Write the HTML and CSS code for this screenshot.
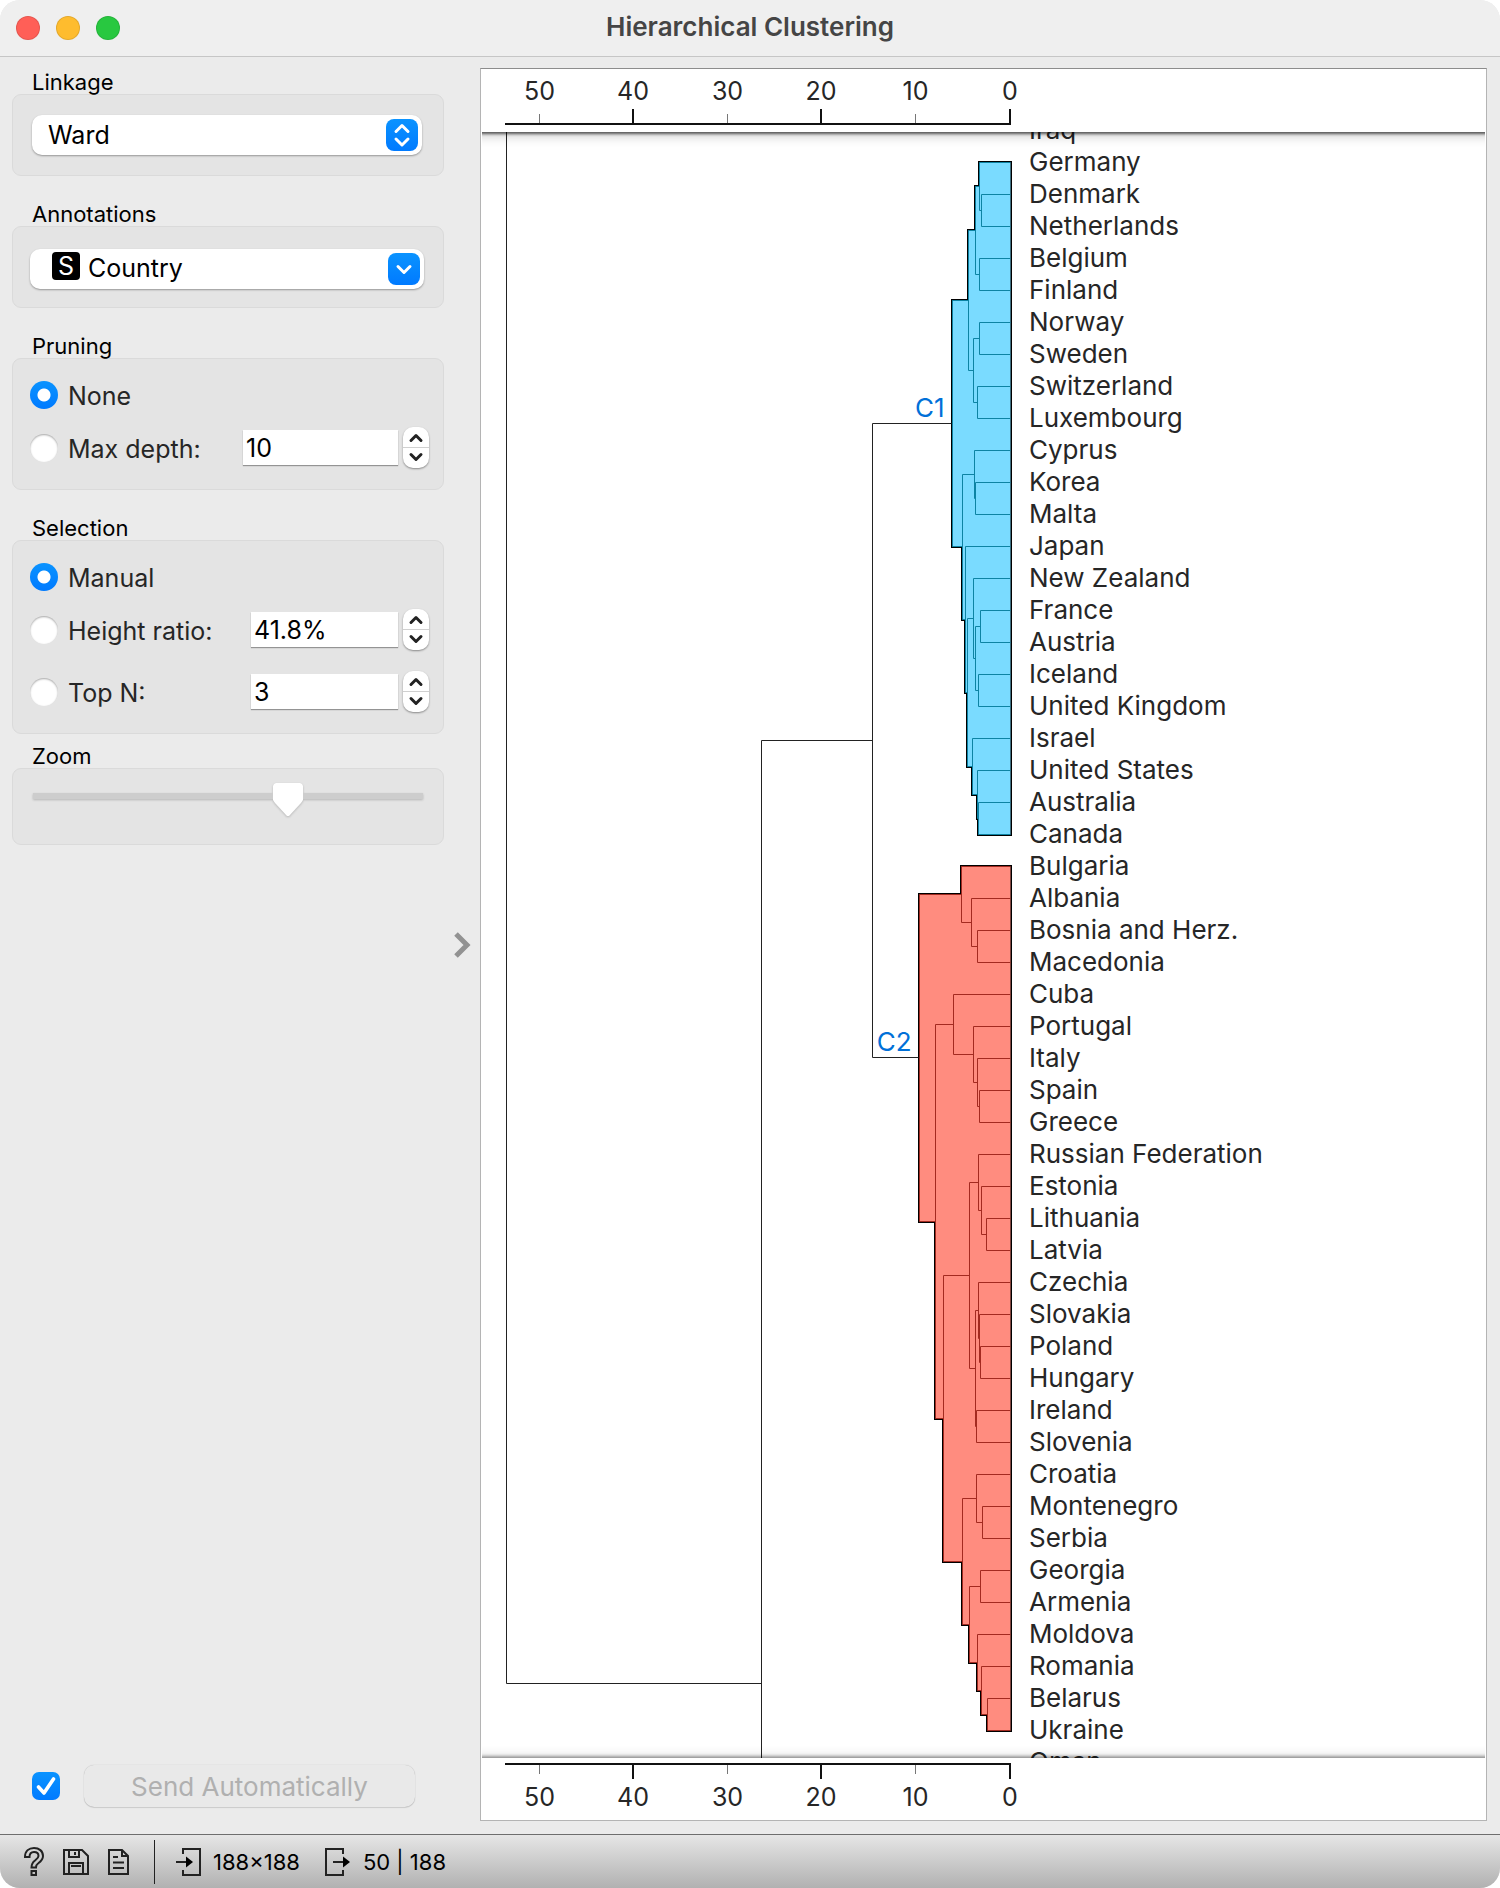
FILE: index.html
```html
<!DOCTYPE html>
<html lang="en">
<head>
    <meta charset="UTF-8">
    <meta name="viewport" content="width=device-width, initial-scale=1.0">
    <title>Hierarchical Clustering</title>
    <link rel="stylesheet" href="styles.css">
</head>
<body>
    <div class="window">
        <header class="titlebar">
            <div class="lights">
                <button class="light close" aria-label="Close"></button>
                <button class="light minimize" aria-label="Minimize"></button>
                <button class="light maximize" aria-label="Zoom window"></button>
            </div>
            <h1>Hierarchical Clustering</h1>
        </header>

        <div class="content">
            <aside class="controls">
                <fieldset class="group">
                    <legend>Linkage</legend>
                    <div class="box">
                        <div class="combo">
                            <select aria-label="Linkage">
                                <option>Ward</option>
                            </select>
                            <svg class="combo-arrow" viewBox="0 0 32 32">
                                <path d="M10 12.5 L16 6.5 L22 12.5 M10 20 L16 26 L22 20"/>
                            </svg>
                        </div>
                    </div>
                </fieldset>

                <fieldset class="group">
                    <legend>Annotations</legend>
                    <div class="box box-wide">
                        <div class="combo combo-icon">
                            <select aria-label="Annotations">
                                <option>Country</option>
                            </select>
                            <span class="var-icon">S</span>
                            <svg class="combo-arrow" viewBox="0 0 32 32">
                                <path d="M10 13.5 L16 19.5 L22 13.5"/>
                            </svg>
                        </div>
                    </div>
                </fieldset>

                <fieldset class="group">
                    <legend>Pruning</legend>
                    <div class="box options">
                        <div class="row">
                            <input type="radio" name="pruning" id="pruneNone" checked>
                            <label for="pruneNone">None</label>
                        </div>
                        <div class="row">
                            <input type="radio" name="pruning" id="pruneDepth">
                            <label for="pruneDepth">Max depth:</label>
                            <input class="spin wide" type="text" value="10" aria-label="Max depth">
                            <div class="stepper">
                                <button aria-label="Increase"><svg viewBox="0 0 26 20"><path d="M8 13.5 L13 8.5 L18 13.5"/></svg></button>
                                <button aria-label="Decrease"><svg viewBox="0 0 26 20"><path d="M8 6.5 L13 11.5 L18 6.5"/></svg></button>
                            </div>
                        </div>
                    </div>
                </fieldset>

                <fieldset class="group group-tight">
                    <legend>Selection</legend>
                    <div class="box options">
                        <div class="row">
                            <input type="radio" name="selection" id="selManual" checked>
                            <label for="selManual">Manual</label>
                        </div>
                        <div class="row">
                            <input type="radio" name="selection" id="selRatio">
                            <label for="selRatio">Height ratio:</label>
                            <input class="spin" type="text" value="41.8%" aria-label="Height ratio">
                            <div class="stepper">
                                <button aria-label="Increase"><svg viewBox="0 0 26 20"><path d="M8 13.5 L13 8.5 L18 13.5"/></svg></button>
                                <button aria-label="Decrease"><svg viewBox="0 0 26 20"><path d="M8 6.5 L13 11.5 L18 6.5"/></svg></button>
                            </div>
                        </div>
                        <div class="row row-last">
                            <input type="radio" name="selection" id="selTop">
                            <label for="selTop">Top N:</label>
                            <input class="spin" type="text" value="3" aria-label="Top N">
                            <div class="stepper">
                                <button aria-label="Increase"><svg viewBox="0 0 26 20"><path d="M8 13.5 L13 8.5 L18 13.5"/></svg></button>
                                <button aria-label="Decrease"><svg viewBox="0 0 26 20"><path d="M8 6.5 L13 11.5 L18 6.5"/></svg></button>
                            </div>
                        </div>
                    </div>
                </fieldset>

                <fieldset class="group">
                    <legend>Zoom</legend>
                    <div class="box zoom-box">
                        <input type="range" class="slider" min="0" max="300" value="200" aria-label="Zoom">
                    </div>
                </fieldset>

                <div class="send">
                    <input type="checkbox" id="auto" aria-label="Send automatically" checked>
                    <button class="send-btn" disabled>Send Automatically</button>
                </div>
            </aside>

            <button class="collapse" aria-label="Toggle control area">
                <svg viewBox="0 0 20 28"><path d="M3 3 L14 14 L3 25"/></svg>
            </button>

            <main class="plot">
                <svg class="axis" id="axisTop" width="560" height="63"></svg>
                <div class="view">
                    <svg class="tree" id="tree" width="531"></svg>
                    <ul class="labels" id="labels"></ul>
                </div>
                <svg class="axis" id="axisBottom" width="560" height="62"></svg>
            </main>
        </div>

        <footer class="statusbar">
            <button class="tool" aria-label="Help">
                <svg width="22" height="32" viewBox="0 0 22 32"><path d="M2 11 C2 5 6 2 11 2 C16 2 20 5 20 10 C20 14 17 16 15 17.5 C13.5 18.5 13 19 13 21.5 H8.5 C8.5 17.5 10 16 12 14.5 C14 13 15.5 12 15.5 10 C15.5 7.5 13.5 6 11 6 C8.5 6 6.5 7.5 6.5 11 Z M8.5 25 H13 V29 H8.5 Z"/></svg>
            </button>
            <button class="tool" aria-label="Save image">
                <svg width="28" height="28" viewBox="0 0 28 28"><path d="M2 2 H20 L26 8 V26 H2 Z M7 2 V9 H17 V2 M13 4 V7 M7 26 V15 H21 V26 M9 18 H19"/></svg>
            </button>
            <button class="tool" aria-label="Report">
                <svg width="23" height="28" viewBox="0 0 23 28"><path d="M2 2 H15 L21 8 V26 H2 Z M15 2 V8 H21 M6 9 H11 M6 14.5 H17 M6 20 H17"/></svg>
            </button>
            <span class="divider"></span>
            <span class="status">
                <svg width="26" height="30" viewBox="0 0 26 30"><path d="M8 7 V2 H25 V28 H8 V23 M1 15 H13"/><path class="solid" d="M11 9.5 L18 15 L11 20.5 Z"/></svg>
                188×188
            </span>
            <span class="status">
                <svg width="26" height="30" viewBox="0 0 26 30"><path d="M18 7 V2 H1 V28 H18 V23 M8 15 H20"/><path class="solid" d="M18 9.5 L25 15 L18 20.5 Z"/></svg>
                50 | 188
            </span>
        </footer>
    </div>

    <script src="script.js"></script>
</body>
</html>
```
FILE: styles.css
```css
:root {
    --window: #ebebeb;
    --box: #e4e4e4;
    --box-border: #dadada;
    --accent: linear-gradient(#0a93ff, #007aff);
    --text: #262626;
}

* {
    box-sizing: border-box;
    margin: 0;
    padding: 0;
}

body {
    background: #fff;
    color: #000;
    font-family: Inter, "Liberation Sans", sans-serif;
    font-size: 25px;
}

button, input, select {
    font: inherit;
    border: none;
}

.window {
    display: flex;
    flex-direction: column;
    min-height: 100vh;
    background: var(--window);
    border-radius: 20px;
    overflow: hidden;
}

/* Title bar */
.titlebar {
    display: grid;
    grid-template-columns: 1fr auto 1fr;
    align-items: center;
    height: 57px;
    padding: 0 16px;
    background: #efefef;
    border-bottom: 1px solid #c6c6c6;
}

.titlebar h1 {
    padding-bottom: 2px;
    font-size: 26px;
    font-weight: 600;
    line-height: 54px;
    color: #454545;
}

.lights {
    display: flex;
    gap: 16px;
}

.light {
    width: 24px;
    height: 24px;
    border-radius: 50%;
    border: 1px solid rgba(0, 0, 0, 0.1);
}

.close {
    background: #ff5f57;
}

.minimize {
    background: #febc2e;
}

.maximize {
    background: #28c840;
}

.content {
    flex: 1;
    display: flex;
    padding: 11px 13px 13px 12px;
}

/* Control area */
.controls {
    display: flex;
    flex-direction: column;
    width: 432px;
}

.group {
    border: none;
    margin-bottom: 24px;
}

.group-tight {
    margin-bottom: 8px;
}

.group legend {
    padding: 2px 0 0 20px;
    font-size: 22px;
    line-height: 24px;
}

.box {
    background: var(--box);
    border: 1px solid var(--box-border);
    border-radius: 9px;
    padding: 20px 21px 20px 19px;
}

.box-wide {
    padding: 22px 19px 18px 17px;
}

.combo {
    position: relative;
    height: 40px;
}

.combo select {
    appearance: none;
    width: 100%;
    height: 40px;
    padding-left: 16px;
    border-radius: 10px;
    background: #fff;
    color: #000;
    box-shadow: 0 1px 2px rgba(0, 0, 0, 0.35);
}

.combo-icon select {
    padding-left: 58px;
    padding-bottom: 2px;
}

.combo-arrow {
    position: absolute;
    top: 4px;
    right: 4px;
    width: 32px;
    height: 32px;
    border-radius: 8px;
    background: var(--accent);
    fill: none;
    stroke: #fff;
    stroke-width: 3;
    stroke-linecap: round;
    stroke-linejoin: round;
    pointer-events: none;
}

.var-icon {
    position: absolute;
    left: 22px;
    top: 3px;
    width: 28px;
    height: 28px;
    border-radius: 4px;
    background: #000;
    color: #fff;
    line-height: 28px;
    text-align: center;
    pointer-events: none;
}

.options {
    display: flex;
    flex-direction: column;
    gap: 12px;
    padding: 15px 14px 21px 17px;
}

.row {
    display: flex;
    align-items: center;
    height: 41px;
    color: var(--text);
}

.row-last {
    margin-top: 9px;
}

.row label {
    flex: 1;
    padding: 2px 0 0 10px;
}

input[type="radio"] {
    appearance: none;
    width: 28px;
    height: 28px;
    border-radius: 50%;
    background: #fff;
    box-shadow: inset 0 1px 2px rgba(0, 0, 0, 0.35);
}

input[type="radio"]:checked {
    background: radial-gradient(circle, #fff 6px, transparent 7px), var(--accent);
    box-shadow: none;
}

.spin {
    width: 147px;
    height: 35px;
    padding-left: 3px;
    background: #fff;
    color: #000;
    box-shadow: 0 1px 1px rgba(0, 0, 0, 0.35);
}

.spin.wide {
    width: 155px;
}

.stepper {
    display: flex;
    flex-direction: column;
    width: 26px;
    height: 41px;
    margin-left: 5px;
    border-radius: 10px;
    background: #fff;
    box-shadow: 0 1px 2px rgba(0, 0, 0, 0.4);
    overflow: hidden;
}

.stepper button {
    height: 20px;
    background: none;
}

.stepper button + button {
    height: 21px;
    border-top: 1px solid #d0d0d0;
}

.stepper svg {
    display: block;
    width: 26px;
    height: 20px;
    fill: none;
    stroke: #222;
    stroke-width: 3;
    stroke-linecap: round;
    stroke-linejoin: round;
}

.zoom-box {
    height: 77px;
    padding: 14px 20px 0 20px;
}

.slider {
    appearance: none;
    display: block;
    width: 100%;
    height: 34px;
    background: linear-gradient(#cdcdcd, #cdcdcd) 0 10px / 100% 6px no-repeat;
    filter: drop-shadow(0 1px 1px rgba(0, 0, 0, 0.2));
}

.slider::-webkit-slider-thumb {
    appearance: none;
    width: 30px;
    height: 34px;
    background: #fff;
    clip-path: polygon(0 3px, 1px 1px, 3px 0, 27px 0, 29px 1px, 30px 3px, 30px 17px, 28px 20px, 16px 33px, 14px 33px, 2px 20px, 0 17px);
}

.send {
    display: flex;
    align-items: center;
    margin-top: auto;
    padding: 0 29px 14px 20px;
}

.send input {
    appearance: none;
    width: 28px;
    height: 28px;
    border-radius: 7px;
    background: url("data:image/svg+xml,%3Csvg xmlns='http://www.w3.org/2000/svg' viewBox='0 0 28 28'%3E%3Cpath d='M6.5 15 L12 21 L21.5 7' fill='none' stroke='white' stroke-width='3.6' stroke-linecap='round' stroke-linejoin='round'/%3E%3C/svg%3E"), var(--accent);
}

.send-btn {
    flex: 1;
    height: 42px;
    margin-left: 24px;
    border-radius: 10px;
    background: #e9e9e9;
    color: #b0b0b0;
    font-size: 26px;
    box-shadow: 0 0 1px rgba(0, 0, 0, 0.25), 0 1px 1px rgba(0, 0, 0, 0.12);
}

.collapse {
    width: 36px;
    background: none;
}

.collapse svg {
    display: block;
    width: 20px;
    height: 28px;
    margin-left: 9px;
    fill: none;
    stroke: #929292;
    stroke-width: 5;
}

/* Dendrogram */
.plot {
    flex: 1;
    display: flex;
    flex-direction: column;
    min-width: 0;
    background: #fff;
    border: 1px solid #b4b4b4;
    border-top-color: #8c8c8c;
}

.axis {
    display: block;
    fill: var(--text);
    font-size: 25px;
    text-anchor: middle;
}

.axis .major {
    stroke: #111;
    stroke-width: 2;
}

.axis .minor {
    stroke: #777;
}

.view {
    position: relative;
    flex: 1 1 0;
    display: flex;
    overflow: hidden;
}

/* shadows cast by the two axes over the scrolled tree */
.view::after {
    content: "";
    position: absolute;
    inset: 0 -10px;
    box-shadow: inset 0 2px 3px rgba(0, 0, 0, 0.6), inset 0 8px 12px -4px rgba(0, 0, 0, 0.2), inset 0 -2px 3px rgba(0, 0, 0, 0.35), inset 0 -8px 10px -4px rgba(0, 0, 0, 0.1);
    clip-path: inset(0 11px);
    pointer-events: none;
}

.tree {
    height: 100%;
    flex: none;
    overflow: hidden;
    fill: none;
}

.tree .link {
    stroke: #222;
}

.tree .hull {
    stroke: #000;
    stroke-width: 3;
    paint-order: stroke;
}

.tree .c1 {
    fill: #7adbff;
}

.tree .c2 {
    fill: #ff8c7f;
}

.tree .link-c1 {
    stroke: #0d83a3;
}

.tree .link-c2 {
    stroke: #a32a20;
}

.tree text {
    fill: #0070d8;
    font-size: 26px;
    text-anchor: end;
}

.labels {
    list-style: none;
    height: 0;
    margin-top: -18px;
    padding-left: 17px;
    color: var(--text);
    font-size: 26px;
    line-height: 32px;
    white-space: nowrap;
}

/* Status bar */
.statusbar {
    display: flex;
    align-items: center;
    height: 54px;
    padding-left: 23px;
    border-top: 1px solid #6e6e6e;
    background: linear-gradient(#e6e6e6, #b1b1b1);
    font-size: 22px;
}

.statusbar svg {
    display: block;
    fill: none;
    stroke: #222;
    stroke-width: 2;
}

.statusbar .solid {
    fill: #000;
    stroke: none;
}

.tool {
    background: none;
    margin-right: 17px;
}

.divider {
    width: 1px;
    height: 44px;
    margin: 0 20px 0 7px;
    background: #222;
}

.status {
    display: flex;
    align-items: center;
    gap: 12px;
    margin-right: 25px;
}
```
FILE: script.js
```js
const SVG = "http://www.w3.org/2000/svg";
const ROW = 32;
const FIRST_ROW = 30.5;
const BASE = 529.5;

const countries = [
    "Iraq", "Germany", "Denmark", "Netherlands", "Belgium", "Finland", "Norway", "Sweden",
    "Switzerland", "Luxembourg", "Cyprus", "Korea", "Malta", "Japan", "New Zealand", "France",
    "Austria", "Iceland", "United Kingdom", "Israel", "United States", "Australia", "Canada",
    "Bulgaria", "Albania", "Bosnia and Herz.", "Macedonia", "Cuba", "Portugal", "Italy", "Spain",
    "Greece", "Russian Federation", "Estonia", "Lithuania", "Latvia", "Czechia", "Slovakia",
    "Poland", "Hungary", "Ireland", "Slovenia", "Croatia", "Montenegro", "Serbia", "Georgia",
    "Armenia", "Moldova", "Romania", "Belarus", "Ukraine", "Oman"
];

// a node is [distance from the base line, first child, second child]; 0 is a leaf
const c1 = [58,
    [42,
        [35, [31, 0, [29, 0, 0]], [31, 0, 0]],
        [37, [31, 0, 0], [33, 0, 0]]],
    [48,
        [36, 0, [35, 0, 0]],
        [45, 0,
            [43,
                [37, 0, [35, [30, 0, 0], [32, 0, 0]]],
                [38, 0, [33, 0, [32, 0, 0]]]]]]];

const c2 = [91,
    [49, 0, [39, 0, [33, 0, 0]]],
    [75,
        [57, 0, [37, 0, [33, 0, [31, 0, 0]]]],
        [67,
            [41,
                [32, 0, [29, 0, [24, 0, 0]]],
                [35, [32, 0, [31, 0, [30, 0, 0]]], [34, 0, 0]]],
            [48,
                [34, 0, [28, 0, 0]],
                [41, [30, 0, 0], [33, 0, [29, 0, [23, 0, 0]]]]]]]];

const tree = document.getElementById("tree");
let row = 0;

function add(parent, tag, attrs, text) {
    const el = document.createElementNS(SVG, tag);
    for (const key in attrs) el.setAttribute(key, attrs[key]);
    if (text !== undefined) el.textContent = text;
    parent.appendChild(el);
    return el;
}

function snap(v) {
    return Math.ceil(v) - 0.5;
}

function place(node) {
    if (node === 0) return { x: BASE, y: FIRST_ROW + ROW * row++ };
    const a = place(node[1]);
    const b = place(node[2]);
    return { x: BASE - node[0], y: (a.y + b.y) / 2, a, b };
}

function links(n) {
    if (!n.a) return "";
    return `M${n.a.x} ${snap(n.a.y)}H${n.x}V${snap(n.b.y)}H${n.b.x}` + links(n.a) + links(n.b);
}

function edge(n, side) {
    const points = [];
    while (n[side]) {
        points.push([n.x, snap(n[side].y)], [n[side].x, snap(n[side].y)]);
        n = n[side];
    }
    return points;
}

function drawCluster(data, name) {
    const n = place(data);
    const id = name.toLowerCase();
    const outline = edge(n, "a").reverse().concat(edge(n, "b"));
    add(tree, "polygon", { class: "hull " + id, points: outline.join(" ") });
    add(tree, "path", { class: "link-" + id, d: links(n) });
    add(tree, "text", { x: n.x - 8, y: n.y - 7 }, name);
    return n;
}

function drawAxis(id, down) {
    const svg = document.getElementById(id);
    const line = down ? 6 : 55;
    const dir = down ? 1 : -1;
    add(svg, "path", { class: "major", d: `M24 ${line}H530` });
    for (let value = 0; value <= 50; value += 10) {
        const major = value % 20 === 0;
        const x = Math.floor(529 - value * 9.42) + (major ? 0 : 0.5);
        add(svg, "path", { class: major ? "major" : "minor", d: `M${x} ${line + dir}V${line + dir * (major ? 15 : 10)}` });
        add(svg, "text", { x: x, y: down ? 48 : 31 }, value);
    }
}

document.getElementById("labels").innerHTML = countries.map(c => `<li>${c}</li>`).join("");

const first = drawCluster(c1, "C1");
const second = drawCluster(c2, "C2");
const y1 = snap(first.y);
const y2 = snap(second.y);
const mid = snap((first.y + second.y) / 2);

add(tree, "path", {
    class: "link",
    d: `M${first.x - 1} ${y1}H391.5V${y2}H${second.x - 1} M391.5 ${mid}H280.5V2490 M280.5 1551.5H25.5V-10`
});

drawAxis("axisTop", false);
drawAxis("axisBottom", true);
```
